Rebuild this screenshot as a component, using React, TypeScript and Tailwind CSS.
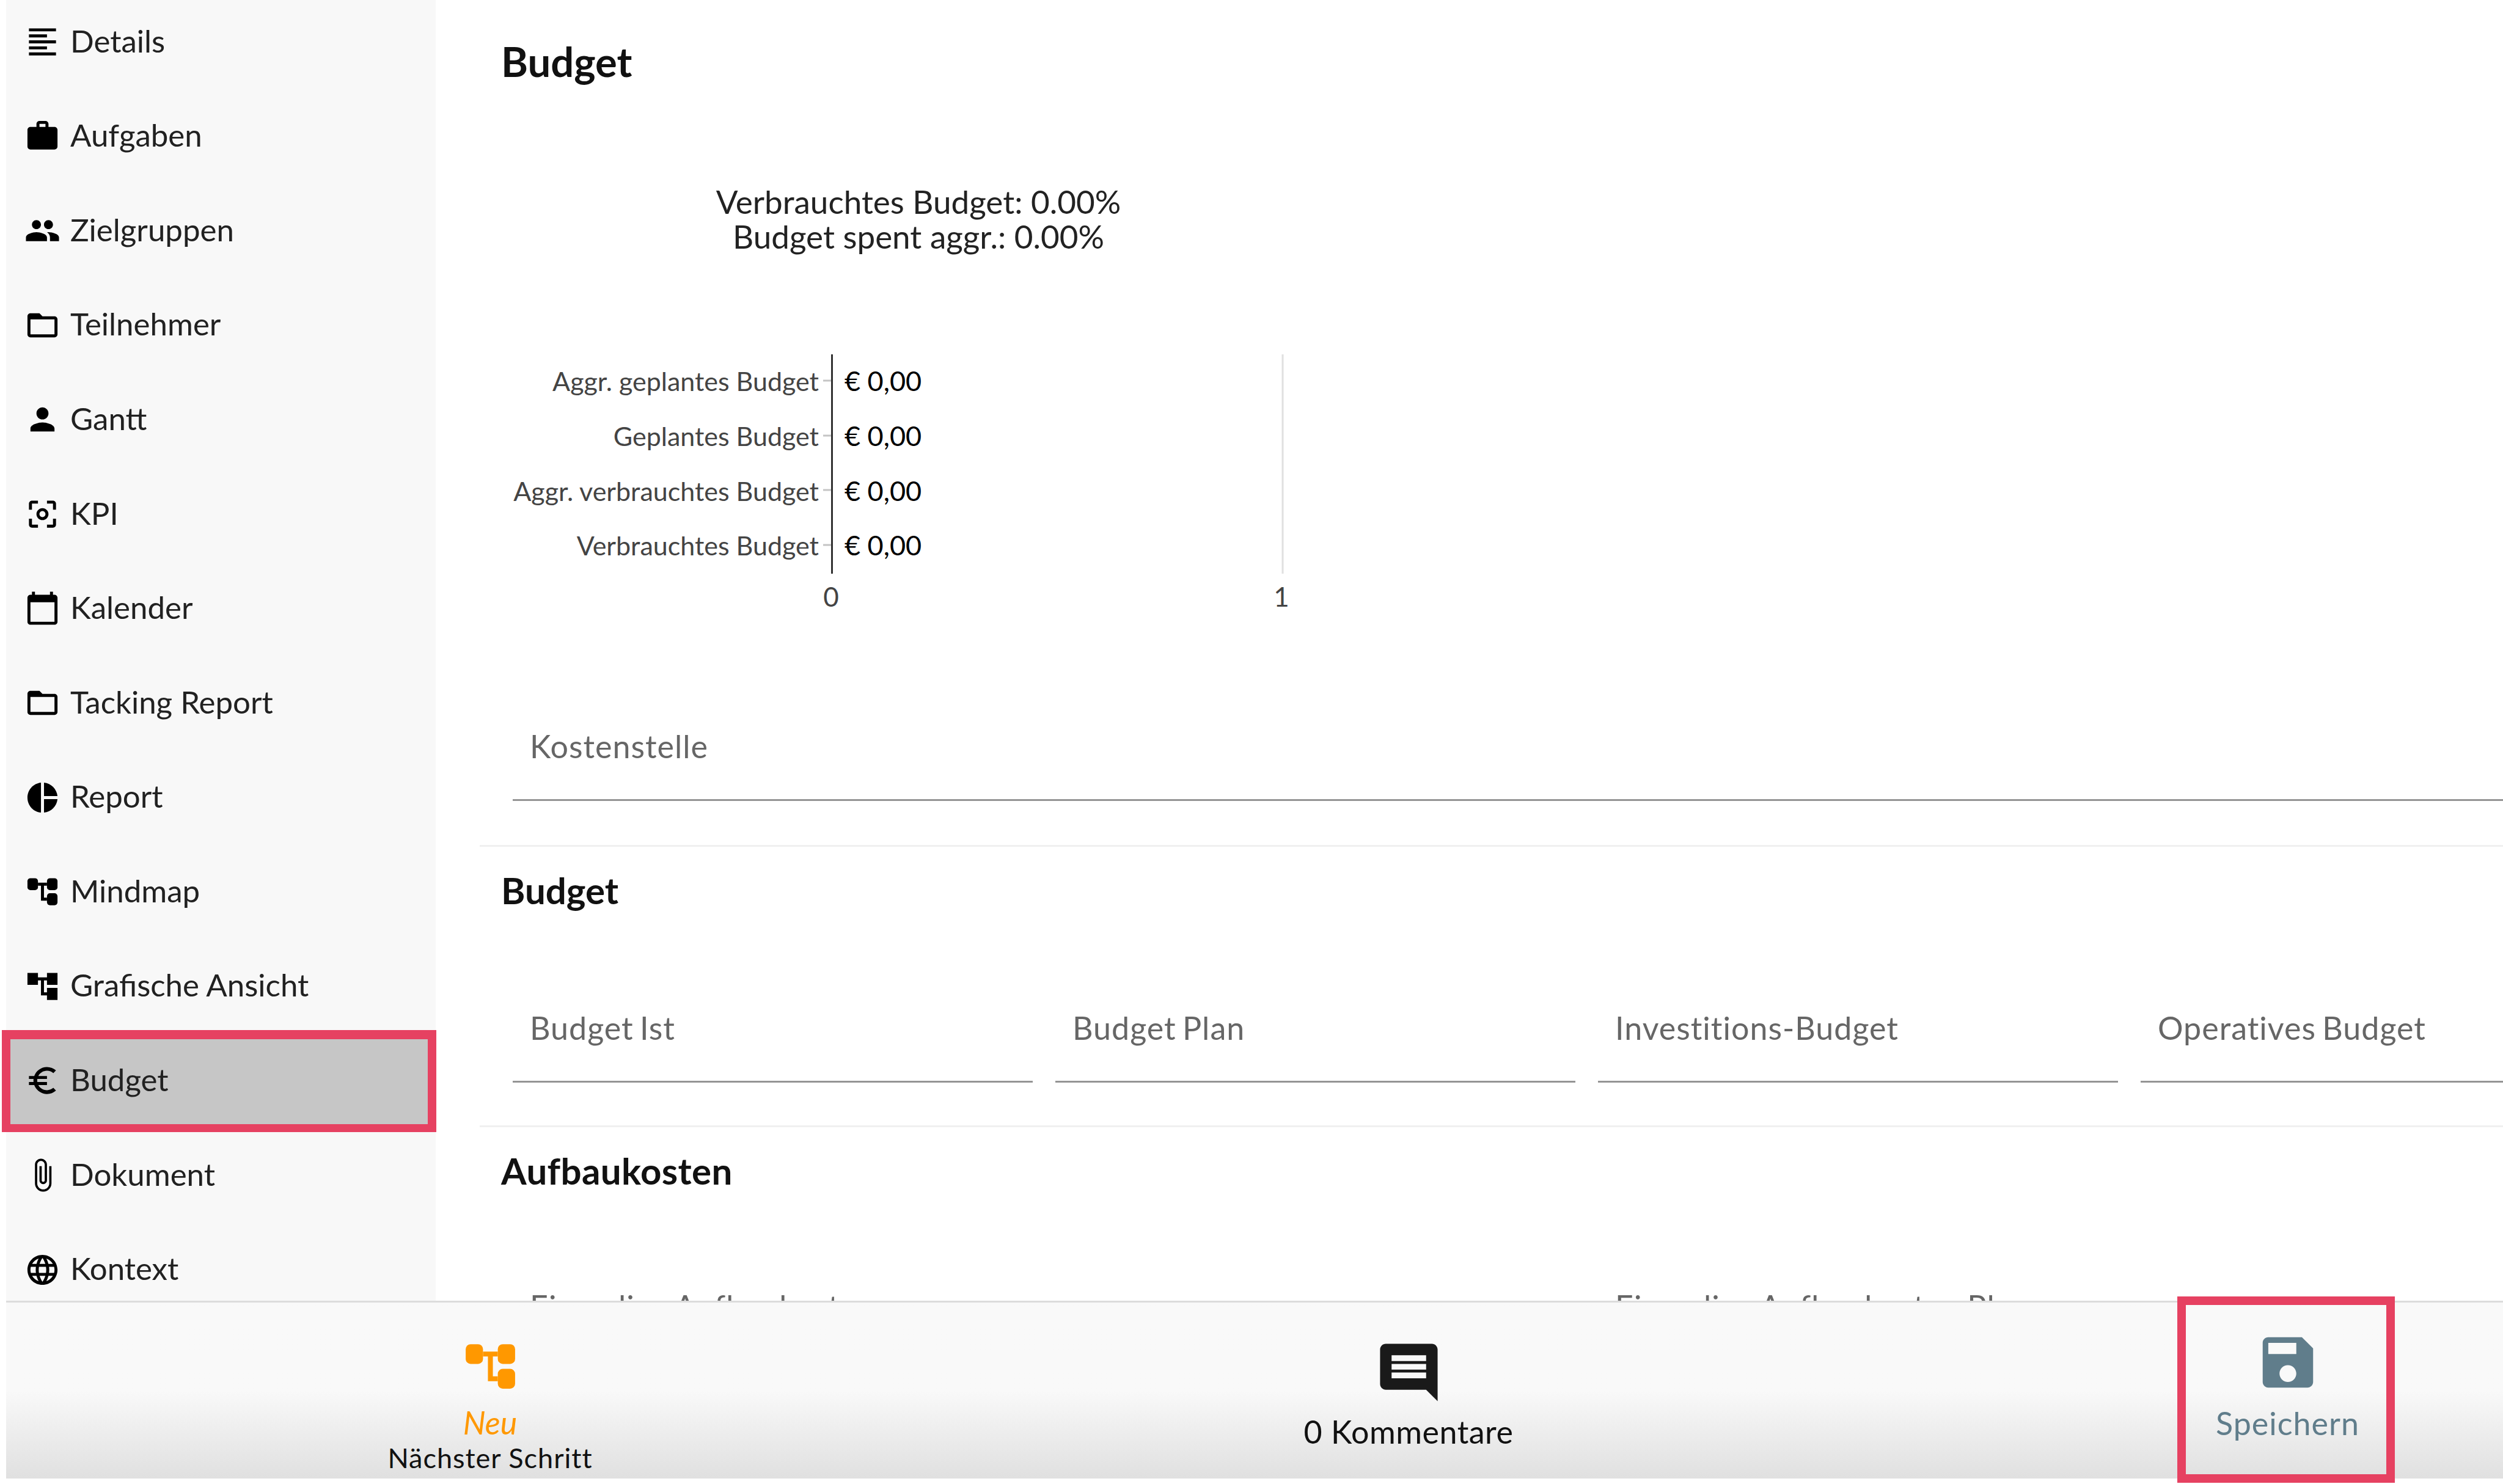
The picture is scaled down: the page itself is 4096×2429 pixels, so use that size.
const paths: Record<string, string> = {
    details: "M15 15H3v2h12v-2zm0-8H3v2h12V7zM3 13h18v-2H3v2zm0 8h18v-2H3v2zM3 3v2h18V3H3z",
    work: "M20 6h-4V4c0-1.11-.89-2-2-2h-4c-1.11 0-2 .89-2 2v2H4c-1.11 0-1.99.89-1.99 2L2 19c0 1.11.89 2 2 2h16c1.11 0 2-.89 2-2V8c0-1.11-.89-2-2-2zm-6 0h-4V4h4v2z",
    people: "M16 11c1.66 0 2.99-1.34 2.99-3S17.66 5 16 5c-1.66 0-3 1.34-3 3s1.34 3 3 3zm-8 0c1.66 0 2.99-1.34 2.99-3S9.66 5 8 5C6.34 5 5 6.34 5 8s1.34 3 3 3zm0 2c-2.33 0-7 1.17-7 3.5V19h14v-2.5c0-2.33-4.67-3.5-7-3.5zm8 0c-.29 0-.62.02-.97.05 1.16.84 1.97 1.97 1.97 3.45V19h6v-2.5c0-2.33-4.67-3.5-7-3.5z",
    folder: "M20 6h-8l-2-2H4c-1.1 0-1.99.9-1.99 2L2 18c0 1.1.9 2 2 2h16c1.1 0 2-.9 2-2V8c0-1.1-.9-2-2-2zm0 12H4V8h16v10z",
    person: "M12 12c2.21 0 4-1.79 4-4s-1.79-4-4-4-4 1.79-4 4 1.79 4 4 4zm0 2c-2.67 0-8 1.34-8 4v2h16v-2c0-2.66-5.33-4-8-4z",
    focus: "M5 15H3v4c0 1.1.9 2 2 2h4v-2H5v-4zM5 5h4V3H5c-1.1 0-2 .9-2 2v4h2V5zm14-2h-4v2h4v4h2V5c0-1.1-.9-2-2-2zm0 16h-4v2h4c1.1 0 2-.9 2-2v-4h-2v4zM12 8c-2.21 0-4 1.79-4 4s1.79 4 4 4 4-1.79 4-4-1.79-4-4-4zm0 6c-1.1 0-2-.9-2-2s.9-2 2-2 2 .9 2 2-.9 2-2 2z",
    calendar: "M20 3h-1V1h-2v2H7V1H5v2H4c-1.1 0-2 .9-2 2v16c0 1.1.9 2 2 2h16c1.1 0 2-.9 2-2V5c0-1.1-.9-2-2-2zm0 18H4V8h16v13z",
    pie: "M11 2v20c-5.07-.5-9-4.79-9-10s3.93-9.5 9-10zm2.03 0v8.99H22c-.47-4.74-4.24-8.52-8.97-8.99zm0 11.01V22c4.74-.47 8.5-4.25 8.97-8.99h-8.97z",
    tree: "M22 11V3h-7v3H9V3H2v8h7V8h2v10h4v3h7v-8h-7v3h-2V8h2v3z",
    euro: "M15 18.5c-2.51 0-4.68-1.42-5.76-3.5H15v-2H8.58c-.05-.33-.08-.66-.08-1s.03-.67.08-1H15V9H9.24C10.32 6.92 12.5 5.5 15 5.5c1.61 0 3.09.59 4.23 1.57L21 5.3C19.41 3.87 17.3 3 15 3c-3.92 0-7.24 2.51-8.48 6H3v2h3.06c-.04.33-.06.66-.06 1 0 .34.02.67.06 1H3v2h3.52c1.24 3.49 4.56 6 8.48 6 2.31 0 4.41-.87 6-2.3l-1.78-1.77c-1.13.98-2.6 1.57-4.2 1.57z",
    attach: "M16.5 6v11.5c0 2.21-1.79 4-4 4s-4-1.79-4-4V5c0-1.38 1.12-2.5 2.5-2.5s2.5 1.12 2.5 2.5v10.5c0 .55-.45 1-1 1s-1-.45-1-1V6H10v9.5c0 1.38 1.12 2.5 2.5 2.5s2.5-1.12 2.5-2.5V5c0-2.21-1.79-4-4-4S7 2.79 7 5v12.5c0 3.04 2.46 5.5 5.5 5.5s5.5-2.46 5.5-5.5V6h-1.5z",
    globe: "M11.99 2C6.47 2 2 6.48 2 12s4.47 10 9.99 10C17.52 22 22 17.52 22 12S17.52 2 11.99 2zm6.93 6h-2.95c-.32-1.25-.78-2.45-1.38-3.56 1.84.63 3.37 1.91 4.33 3.56zM12 4.04c.83 1.2 1.48 2.53 1.91 3.96h-3.82c.43-1.43 1.08-2.76 1.91-3.96zM4.26 14C4.1 13.36 4 12.69 4 12s.1-1.36.26-2h3.38c-.08.66-.14 1.32-.14 2 0 .68.06 1.34.14 2H4.26zm.82 2h2.95c.32 1.25.78 2.45 1.38 3.56-1.84-.63-3.37-1.9-4.33-3.56zm2.95-8H5.08c.96-1.66 2.49-2.93 4.33-3.56C8.81 5.55 8.35 6.75 8.03 8zM12 19.96c-.83-1.2-1.48-2.53-1.91-3.96h3.82c-.43 1.43-1.08 2.76-1.91 3.96zM14.34 14H9.66c-.09-.66-.16-1.32-.16-2 0-.68.07-1.35.16-2h4.68c.09.65.16 1.32.16 2 0 .68-.07 1.34-.16 2zm.25 5.56c.6-1.11 1.06-2.31 1.38-3.56h2.95c-.96 1.65-2.49 2.93-4.33 3.56zM16.36 14c.08-.66.14-1.32.14-2 0-.68-.06-1.34-.14-2h3.38c.16.64.26 1.31.26 2s-.1 1.36-.26 2h-3.38z",
    comment: "M21.99 4c0-1.1-.89-2-1.99-2H4c-1.1 0-2 .9-2 2v12c0 1.1.9 2 2 2h14l4 4-.01-18zM18 14H6v-2h12v2zm0-3H6V9h12v2zm0-3H6V6h12v2z",
    save: "M17 3H5c-1.11 0-2 .9-2 2v14c0 1.1.89 2 2 2h14c1.1 0 2-.89 2-2V7l-4-4zm-5 16c-1.66 0-3-1.34-3-3s1.34-3 3-3 3 1.34 3 3-1.34 3-3 3zm3-10H5V5h10v4z",
};

function Icon({ name, className }: { name: string; className: string }) {
    return (
        <svg viewBox="0 0 24 24" fill="currentColor" className={className}>
            <path d={paths[name]} />
        </svg>
    );
}

// rounded variant of the tree icon, used by Mindmap and the next step button
function RoundTree({ className }: { className: string }) {
    return (
        <svg viewBox="0 0 24 24" fill="currentColor" className={className}>
            <rect x="2" y="3" width="7" height="8" rx="2" />
            <rect x="15" y="3" width="7" height="8" rx="2" />
            <rect x="15" y="13" width="7" height="8" rx="2" />
            <path d="M9 6h6v2h-2v8h2v2h-4V8H9z" />
        </svg>
    );
}

const menu = [
    { label: "Details", icon: "details" },
    { label: "Aufgaben", icon: "work" },
    { label: "Zielgruppen", icon: "people" },
    { label: "Teilnehmer", icon: "folder" },
    { label: "Gantt", icon: "person" },
    { label: "KPI", icon: "focus" },
    { label: "Kalender", icon: "calendar" },
    { label: "Tacking Report", icon: "folder" },
    { label: "Report", icon: "pie" },
    { label: "Mindmap", icon: "round" },
    { label: "Grafische Ansicht", icon: "tree" },
    { label: "Budget", icon: "euro", active: true },
    { label: "Dokument", icon: "attach" },
    { label: "Kontext", icon: "globe" },
];

const bars = [
    { label: "Aggr. geplantes Budget", text: 436, tick: 419 },
    { label: "Geplantes Budget", text: 526, tick: 509 },
    { label: "Aggr. verbrauchtes Budget", text: 615.5, tick: 598 },
    { label: "Verbrauchtes Budget", text: 705, tick: 688 },
];

function BudgetChart() {
    return (
        <svg viewBox="0 0 1500 932" className="h-[932px] w-[1500px] block font-['Lato',sans-serif]">
            <text x="718" y="146" textAnchor="middle" fontSize="53" fill="#222">Verbrauchtes Budget: 0.00%</text>
            <text x="718" y="203" textAnchor="middle" fontSize="53" fill="#222">Budget spent aggr.: 0.00%</text>
            <line x1="1314" y1="376" x2="1314" y2="735" stroke="#e0e0e0" strokeWidth="3" />
            {bars.map((b) => (
                <g key={b.label}>
                    <line x1="562" y1={b.tick} x2="576" y2={b.tick} stroke="#c4c4c4" strokeWidth="3" />
                    <text x="555" y={b.text} textAnchor="end" fontSize="43" fill="#444">{b.label}</text>
                    <text x="597" y={b.text} fontSize="45" fill="#000">€ 0,00</text>
                </g>
            ))}
            <line x1="576.5" y1="376" x2="576.5" y2="735" stroke="#333" strokeWidth="3" />
            <text x="575" y="789" textAnchor="middle" fontSize="44" fill="#444">0</text>
            <text x="1312" y="789" textAnchor="middle" fontSize="44" fill="#444">1</text>
        </svg>
    );
}

function Field({ label, className }: { label: string; className: string }) {
    return (
        <div className={`h-[175px] shrink-0 border-b-[3px] border-[#949494] px-[28px] pb-[2px] flex items-center text-[52px] tracking-[1px] [word-spacing:-4px] text-[#666] whitespace-nowrap ${className}`}>
            {label}
        </div>
    );
}

export default function App() {
    return (
        <div className="h-[2429px] w-[4096px] overflow-hidden bg-white flex flex-col font-['Lato',sans-serif] text-[#212121]">
            {/* Top: menu + form */}
            <div className="h-[2129px] flex overflow-hidden pl-[10px]">
                <div className="w-[703px] shrink-0 bg-[#f8f8f8]">
                    <div className="-mt-[9px]">
                        {menu.map((m) => (
                            <div
                                key={m.label}
                                className={`relative h-[154.6px] pl-[30px] flex items-center gap-[16px] text-[51px] ${m.active ? "bg-[#c6c6c6]" : ""}`}
                            >
                                {m.icon === "round" ? (
                                    <RoundTree className="w-[59px] h-[59px] text-black" />
                                ) : (
                                    <Icon name={m.icon} className="w-[59px] h-[59px] text-black" />
                                )}
                                <span className="pb-[3px]">{m.label}</span>
                                {m.active && (
                                    <div className="absolute -left-[7px] -right-px -top-[6px] -bottom-[7px] border-x-[14px] border-t-[15px] border-b-[13px] border-[#e64161]" />
                                )}
                            </div>
                        ))}
                    </div>
                </div>

                <div className="flex-1 min-w-0 pl-[72px]">
                    <div className="h-[204px] pl-[35px] pb-[3px] flex items-center text-[67px] font-bold text-[#111]">Budget</div>
                    <BudgetChart />
                    <div className="pl-[54px]">
                        <Field label="Kostenstelle" className="w-full" />
                    </div>
                    <div className="mt-[72px] border-t-[3px] border-[#f0f0f0] h-[145px] pl-[35px] flex items-center text-[60px] font-bold text-[#111]">Budget</div>
                    <div className="mt-[69px] pl-[54px] flex gap-[37px]">
                        <Field label="Budget Ist" className="w-[851px]" />
                        <Field label="Budget Plan" className="w-[851px]" />
                        <Field label="Investitions-Budget" className="w-[851px]" />
                        <Field label="Operatives Budget" className="w-[851px]" />
                    </div>
                    <div className="mt-[70px] border-t-[3px] border-[#f0f0f0] h-[145px] pl-[35px] flex items-center text-[60px] tracking-[0.4px] font-bold text-[#111]">Aufbaukosten</div>
                    <div className="mt-[66px] pl-[54px] flex gap-[37px]">
                        <Field label="Einmalige Aufbaukosten" className="w-[1739px]" />
                        <Field label="Einmalige Aufbaukosten Plan" className="w-[1739px]" />
                    </div>
                </div>
            </div>

            {/* Bottom action bar */}
            <div className="ml-[10px] h-[291px] shrink-0 border-t-[3px] border-[#dcdcdc] bg-gradient-to-b from-[#f9f9f9] from-50% to-[#e0e0e0] flex">
                <div className="relative w-[1584px] shrink-0 flex flex-col items-center">
                    <RoundTree className="mt-[56px] w-[97px] h-[97px] text-[#ff9800]" />
                    <div className="mt-[13px] text-[52px] leading-[60px] italic text-[#ff9800]">Neu</div>
                    <div className="text-[45px] leading-[56px] tracking-[1px] text-[#111]">Nächster Schritt</div>
                </div>
                <div className="w-[1422px] shrink-0 flex flex-col items-center">
                    <Icon name="comment" className="mt-[58px] w-[113px] h-[113px] text-[#1a1a1a]" />
                    <div className="mt-[10px] text-[52px] leading-[60px] tracking-[0.5px] text-[#111]">0 Kommentare</div>
                </div>
                <div className="relative ml-[547px] w-[356px] shrink-0 pl-[5px] flex flex-col items-center">
                    <Icon name="save" className="mt-[43px] w-[110px] h-[110px] text-[#607d8b]" />
                    <div className="mt-[14px] text-[52px] leading-[60px] tracking-[1px] text-[#607d8b]">Speichern</div>
                    <div className="absolute inset-x-0 -top-[10px] -bottom-[7px] border-[14px] border-[#e64161]" />
                </div>
            </div>
        </div>
    );
}
